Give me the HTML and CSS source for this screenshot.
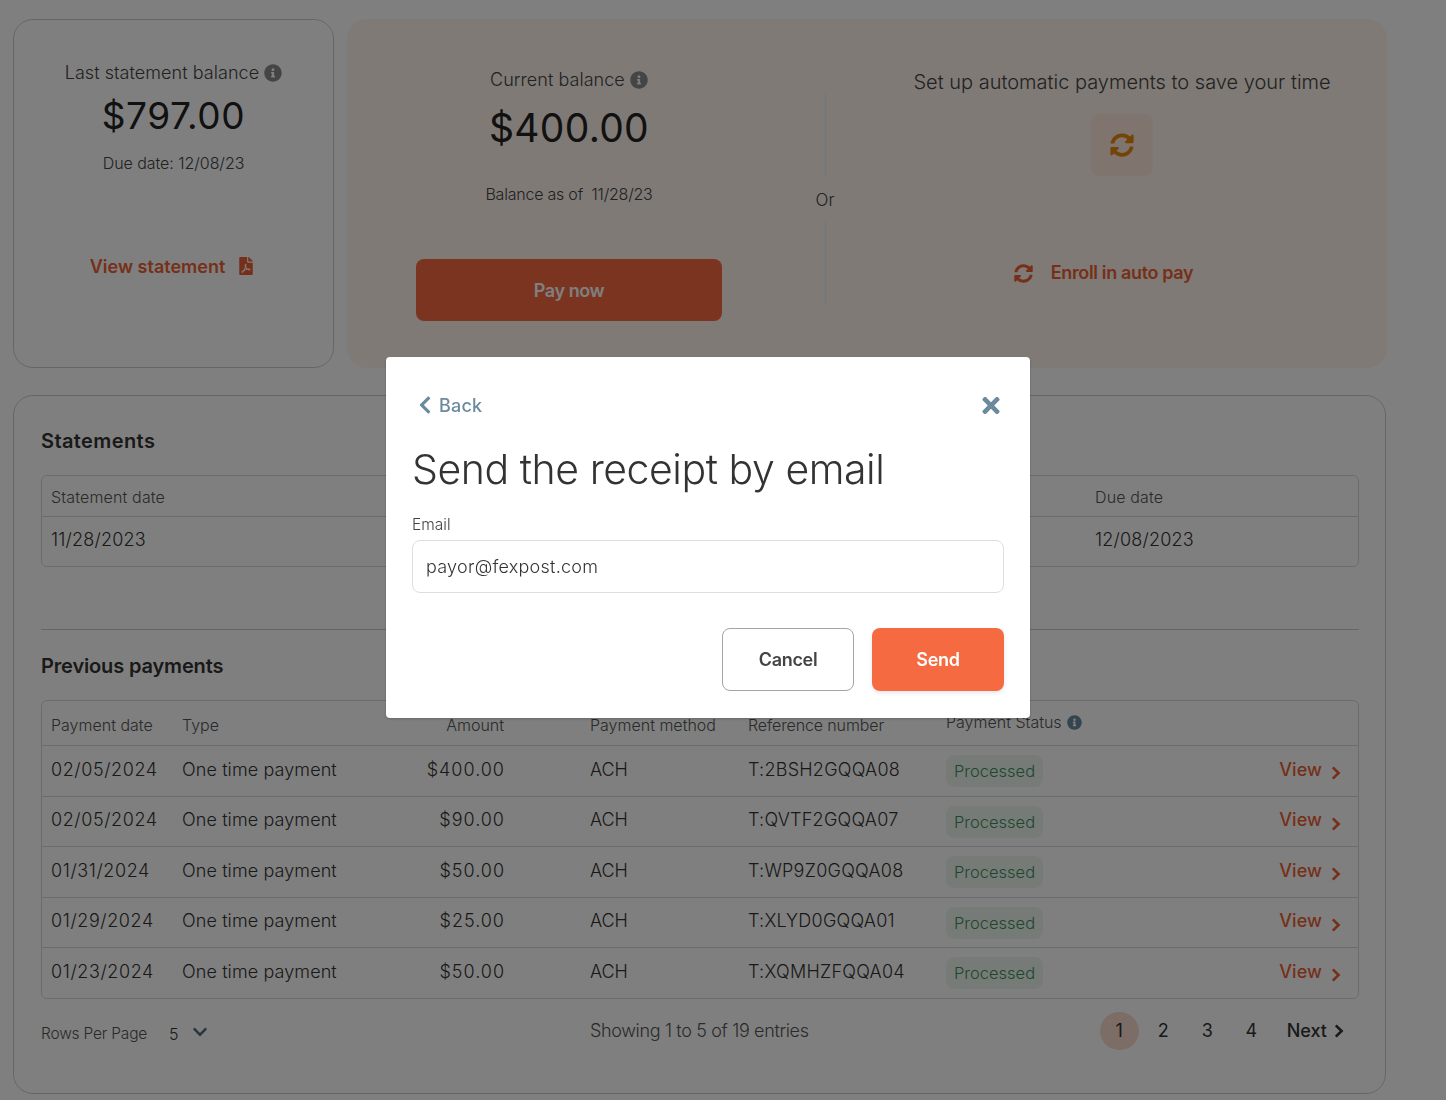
FILE: index.html
```html
<!DOCTYPE html>
<html lang="en">
<head>
<meta charset="utf-8">
<title>Billing</title>
<link rel="stylesheet" href="styles.css">
</head>
<body>
<svg class="defs" aria-hidden="true">
  <symbol id="i-info" viewBox="0 0 512 512"><path d="M256 8C119.043 8 8 119.083 8 256c0 136.997 111.043 248 248 248s248-111.003 248-248C504 119.083 392.957 8 256 8zm0 110c23.196 0 42 18.804 42 42s-18.804 42-42 42-42-18.804-42-42 18.804-42 42-42zm56 254c0 6.627-5.373 12-12 12h-88c-6.627 0-12-5.373-12-12v-24c0-6.627 5.373-12 12-12h12v-64h-12c-6.627 0-12-5.373-12-12v-24c0-6.627 5.373-12 12-12h64c6.627 0 12 5.373 12 12v100h12c6.627 0 12 5.373 12 12v24z"/></symbol>
  <symbol id="i-sync" viewBox="0 0 512 512"><path d="M370.72 133.28C339.458 104.008 298.888 87.962 255.848 88c-77.458.068-144.328 53.178-162.791 126.85-1.344 5.363-6.122 9.15-11.651 9.15H24.103c-7.498 0-13.194-6.807-11.807-14.176C33.933 94.924 134.813 8 256 8c66.448 0 126.791 26.136 171.315 68.685L463.03 40.97C478.149 25.851 504 36.559 504 57.941V192c0 13.255-10.745 24-24 24H345.941c-21.382 0-32.09-25.851-16.971-40.971l41.75-41.749zM32 296h134.059c21.382 0 32.09 25.851 16.971 40.971l-41.75 41.75c31.262 29.273 71.835 45.319 114.876 45.28 77.418-.07 144.315-53.144 162.787-126.849 1.344-5.363 6.122-9.15 11.651-9.15h57.304c7.498 0 13.194 6.807 11.807 14.176C478.067 417.076 377.187 504 256 504c-66.448 0-126.791-26.136-171.315-68.685L48.97 471.03C33.851 486.149 8 475.441 8 454.059V320c0-13.255 10.745-24 24-24z"/></symbol>
  <symbol id="i-right" viewBox="0 0 10 14"><path d="M1.8 1.4 7.6 7 1.8 12.6" fill="none" stroke="currentColor" stroke-width="2.6"/></symbol>
  <symbol id="i-left" viewBox="0 0 320 512"><path d="M34.52 239.03L228.87 44.69c9.37-9.37 24.57-9.37 33.94 0l22.67 22.67c9.36 9.36 9.37 24.52.04 33.9L131.49 256l154.02 154.75c9.34 9.38 9.32 24.54-.04 33.9l-22.67 22.67c-9.37 9.37-24.57 9.37-33.94 0L34.52 272.97c-9.37-9.37-9.37-24.57 0-33.94z"/></symbol>
  <symbol id="i-down" viewBox="0 0 448 512"><path d="M207.029 381.476L12.686 187.132c-9.373-9.373-9.373-24.569 0-33.941l22.667-22.667c9.357-9.357 24.522-9.375 33.901-.04L224 284.505l154.745-154.021c9.379-9.335 24.544-9.317 33.901.04l22.667 22.667c9.373 9.373 9.373 24.569 0 33.941L240.971 381.476c-9.373 9.372-24.569 9.372-33.942 0z"/></symbol>
  <symbol id="i-times" viewBox="0 0 352 512"><path d="M242.72 256l100.07-100.07c12.28-12.28 12.28-32.19 0-44.48l-22.24-22.24c-12.28-12.28-32.19-12.28-44.48 0L176 189.28 75.93 89.21c-12.28-12.28-32.19-12.28-44.48 0L9.21 111.45c-12.28 12.28-12.28 32.19 0 44.48L109.28 256 9.21 356.07c-12.28 12.28-12.28 32.19 0 44.48l22.24 22.24c12.28 12.28 32.2 12.28 44.48 0L176 322.72l100.07 100.07c12.28 12.28 32.2 12.28 44.48 0l22.24-22.24c12.28-12.28 12.28-32.19 0-44.48L242.72 256z"/></symbol>
  <symbol id="i-pdf" viewBox="0 0 384 512"><path d="M181.9 256.1c-5-16-4.9-46.9-2-46.9 8.4 0 7.6 36.9 2 46.9zm-1.7 47.2c-7.7 20.2-17.3 43.3-28.4 62.7 18.3-7 39-17.2 62.9-21.9-12.7-9.6-24.9-23.4-34.5-40.8zM86.1 428.1c0 .8 13.2-5.4 34.9-40.2-6.7 6.3-29.1 24.5-34.9 40.2zM248 160h136v328c0 13.3-10.7 24-24 24H24c-13.3 0-24-10.7-24-24V24C0 10.7 10.7 0 24 0h200v136c0 13.2 10.8 24 24 24zm-8 171.8c-20-12.2-33.3-29-42.7-53.8 4.5-18.5 11.6-46.6 6.2-64.2-4.7-29.4-42.4-26.5-47.8-6.8-5 18.3-.4 44.1 8.1 77-11.6 27.6-28.7 64.6-40.8 85.8-.1 0-.1.1-.2.1-27.1 13.9-73.6 44.5-54.5 68 5.6 6.9 16 10 21.5 10 17.9 0 35.7-18 61.1-61.8 25.8-8.5 54.1-19.1 79-23.2 21.7 11.8 47.1 19.5 64 19.5 29.2 0 31.2-32 19.7-43.4-13.9-13.6-54.3-9.7-73.6-7.2zM377 105L279 7c-4.5-4.5-10.6-7-17-7h-6v128h128v-6.1c0-6.3-2.5-12.4-7-16.9zm-74.1 255.3c4.1-2.7-2.5-11.9-42.8-9 37.1 15.8 42.8 9 42.8 9z"/></symbol>
</svg>

<main class="page">
  <section class="summary">
    <article class="statement-card">
      <p class="label">Last statement balance <svg class="ico info"><use href="#i-info"/></svg></p>
      <p class="amount">$797.00</p>
      <p class="note">Due date: 12/08/23</p>
      <a class="link view-statement">View statement <svg class="ico pdf"><use href="#i-pdf"/></svg></a>
    </article>
    <article class="pay-panel">
      <div class="pay-col">
        <p class="label">Current balance <svg class="ico info"><use href="#i-info"/></svg></p>
        <p class="amount">$400.00</p>
        <p class="note">Balance as of&nbsp; 11/28/23</p>
        <button class="pay-btn">Pay now</button>
      </div>
      <div class="or-col">
        <span class="or-line"></span>
        <span class="or-text">Or</span>
        <span class="or-line"></span>
      </div>
      <div class="auto-col">
        <p class="auto-title">Set up automatic payments to save your time</p>
        <div class="auto-box"><svg class="ico sync-big"><use href="#i-sync"/></svg></div>
        <a class="link enroll"><svg class="ico sync-small"><use href="#i-sync"/></svg>Enroll in auto pay</a>
      </div>
    </article>
  </section>

  <section class="records">
    <h2 class="section-title">Statements</h2>
    <div class="table statements-table">
      <div class="st-row st-head"><span>Statement date</span><span>Due date</span></div>
      <div class="st-row st-body"><span>11/28/2023</span><span>12/08/2023</span></div>
    </div>
    <hr class="rule">
    <h2 class="section-title prev">Previous payments</h2>
    <div class="table">
      <div class="pay-row pay-head">
        <span>Payment date</span><span>Type</span><span class="right">Amount</span><span class="method">Payment method</span><span>Reference number</span>
        <span class="status-head">Payment Status <svg class="ico info slate"><use href="#i-info"/></svg></span><span></span>
      </div>
      <div class="pay-row"><span>02/05/2024</span><span>One time payment</span><span class="right">$400.00</span><span class="method">ACH</span><span>T:2BSH2GQQA08</span><span class="badge">Processed</span><a class="link view">View <svg class="ico chev"><use href="#i-right"/></svg></a></div>
      <div class="pay-row"><span>02/05/2024</span><span>One time payment</span><span class="right">$90.00</span><span class="method">ACH</span><span>T:QVTF2GQQA07</span><span class="badge">Processed</span><a class="link view">View <svg class="ico chev"><use href="#i-right"/></svg></a></div>
      <div class="pay-row"><span>01/31/2024</span><span>One time payment</span><span class="right">$50.00</span><span class="method">ACH</span><span>T:WP9Z0GQQA08</span><span class="badge">Processed</span><a class="link view">View <svg class="ico chev"><use href="#i-right"/></svg></a></div>
      <div class="pay-row"><span>01/29/2024</span><span>One time payment</span><span class="right">$25.00</span><span class="method">ACH</span><span>T:XLYD0GQQA01</span><span class="badge">Processed</span><a class="link view">View <svg class="ico chev"><use href="#i-right"/></svg></a></div>
      <div class="pay-row"><span>01/23/2024</span><span>One time payment</span><span class="right">$50.00</span><span class="method">ACH</span><span>T:XQMHZFQQA04</span><span class="badge">Processed</span><a class="link view">View <svg class="ico chev"><use href="#i-right"/></svg></a></div>
    </div>
    <footer class="pager">
      <div class="rows"><span>Rows Per Page</span><span class="rows-num">5</span><svg class="ico down"><use href="#i-down"/></svg></div>
      <div class="showing">Showing 1 to 5 of 19 entries</div>
      <nav class="pages"><span class="pg current">1</span><span class="pg">2</span><span class="pg">3</span><span class="pg">4</span><span class="next">Next <svg class="ico next-chev"><use href="#i-right"/></svg></span></nav>
    </footer>
  </section>
</main>

<div class="overlay">
  <div class="modal" role="dialog">
    <div class="modal-top">
      <a class="back"><svg class="ico back-chev"><use href="#i-left"/></svg>Back</a>
      <svg class="ico close"><use href="#i-times"/></svg>
    </div>
    <h1 class="modal-title">Send the receipt by email</h1>
    <label class="field-label">Email</label>
    <div class="input">payor@fexpost.com</div>
    <div class="modal-actions">
      <button class="btn cancel">Cancel</button>
      <button class="btn send">Send</button>
    </div>
  </div>
</div>
</body>
</html>
```
FILE: styles.css
```css
* { box-sizing: border-box; }
html, body { margin: 0; height: 100%; overflow: hidden; }
body { font-family: Inter, "Liberation Sans", sans-serif; color: #333; background: #fff; font-weight: 300; }
p, h1, h2 { margin: 0; }
.defs { display: none; }
.ico { fill: currentColor; display: inline-block; }

.page { padding: 19px 0 0 13px; width: 1387px; }
.summary { display: flex; gap: 13px; height: 349px; }
.statement-card { width: 321px; border: 1px solid #c9ced3; border-radius: 20px; padding-top: 41px; display: flex; flex-direction: column; align-items: center; }
.label { font-size: 18px; line-height: 24px; letter-spacing: .05px; color: #444; display: flex; align-items: center; gap: 0; white-space: pre; }
.amount { font-size: 37px; line-height: 44px; font-weight: 400; letter-spacing: .6px; color: #222; }
.statement-card .amount { margin-top: 9px; }
.note { font-size: 16px; line-height: 20px; letter-spacing: -.05px; color: #444; }
.statement-card .note { margin-top: 15px; }
.info { width: 18px; height: 18px; color: #8a8a8a; flex: none; }
.info.slate { width: 15px; height: 15px; color: #6b8a9e; }
.link { color: #ec5f34; font-weight: 600; }
.view-statement { margin-top: 82px; margin-left: -4px; font-size: 18px; line-height: 24px; display: flex; align-items: center; gap: 14px; }
.pdf { width: 14px; height: 18px; margin-top: -3px; }

.pay-panel { width: 1040px; background: #fff4ec; border-radius: 20px; display: flex; padding-left: 69px; }
.pay-col { width: 306px; display: flex; flex-direction: column; align-items: center; padding-top: 49px; }
.pay-col .amount { margin-top: 14px; font-size: 39px; letter-spacing: .3px; }
.pay-col .note { margin-top: 34px; letter-spacing: -.22px; }
.pay-btn { margin-top: 55px; width: 306px; height: 62px; border: 0; border-radius: 8px; background: #f6683f; color: #fff; font: 600 18px Inter, sans-serif; letter-spacing: -.4px; }
.or-col { width: 20px; margin-left: 93px; padding-top: 74px; display: flex; flex-direction: column; align-items: center; }
.or-line { width: 1px; height: 84px; background: #d8f4ff; flex: none; }
.or-text { font-size: 17px; line-height: 24px; margin: 11px 0 9px; color: #444; }
.auto-col { width: 452px; margin-left: 61px; padding-top: 51px; display: flex; flex-direction: column; align-items: center; }
.auto-title { font-size: 20px; line-height: 24px; white-space: nowrap; color: #444; }
.auto-box { margin-top: 20px; width: 62px; height: 62px; border-radius: 8px; background: #ffe8dc; display: flex; align-items: center; justify-content: center; }
.sync-big { width: 24px; height: 24px; color: #e8870c; }
.enroll { margin-top: 85px; font-size: 18px; line-height: 24px; letter-spacing: -.35px; display: flex; align-items: center; margin-left: -37px; }
.sync-small { width: 19px; height: 19px; margin-right: 18px; }

.records { margin-top: 27px; width: 1373px; height: 699px; border: 1px solid #c9ced3; border-radius: 20px; padding: 32px 26px 0 27px; }
.section-title { font-size: 20px; line-height: 26px; font-weight: 600; letter-spacing: .4px; color: #333; }
.table { border: 1px solid #d5d9dc; border-radius: 6px; margin-top: 21px; font-size: 18px; }
.statements-table { margin-top: 21px; height: 92px; }
.st-row { display: grid; grid-template-columns: 1044px 1fr; padding-left: 9px; align-items: center; }
.st-head { height: 41px; padding-top: 2px; font-size: 16px; letter-spacing: .15px; color: #555; border-bottom: 1px solid #d5d9dc; }
.st-body { height: 49px; padding-bottom: 4px; font-size: 18px; letter-spacing: .2px; color: #333; }
.rule { border: 0; border-top: 1px solid #c9ced3; margin: 62px 0 0; }
.section-title.prev { margin-top: 23px; letter-spacing: -.15px; }
.pay-row { display: grid; grid-template-columns: 131px 218px 104px 244px 198px 1fr auto; padding: 0 17px 3px 9px; align-items: center; height: 50.5px; border-bottom: 1px solid #d5d9dc; letter-spacing: .1px; white-space: nowrap; }
.pay-row:last-child { border-bottom: 0; height: 49.5px; }
.pay-row > :first-child { letter-spacing: .6px; }
.pay-row > :nth-child(5) { letter-spacing: .25px; }
.right { text-align: right; letter-spacing: 1px; margin-right: -1px; }
.pay-row.pay-head { height: 45px; padding: 4px 16px 0 9px; font-size: 16px; color: #555; }
.pay-row.pay-head > * { letter-spacing: 0; }
.pay-row.pay-head > :nth-child(5) { letter-spacing: -.12px; }
.pay-row.pay-head .right { margin-right: 0; }
.method { padding-left: 86px; letter-spacing: -.15px; }
.status-head { display: flex; align-items: center; gap: 5px; margin-top: -6px; }
.badge { justify-self: start; height: 32px; line-height: 32px; padding: 0 8px; border-radius: 8px; background: #eef6f1; color: #3a9058; font-size: 16.5px; letter-spacing: 0; margin-top: 4px; }
.view { font-weight: 500; font-size: 18px; letter-spacing: .05px; display: flex; align-items: center; gap: 9px; }
.chev { width: 10px; height: 14px; margin-top: 8px; }

.pager { display: grid; grid-template-columns: 549px 1fr auto; align-items: center; padding: 0 15px 0 0; height: 64px; }
.rows { display: flex; align-items: center; font-size: 15.5px; letter-spacing: -.2px; color: #555; margin-top: 6px; }
.rows-num { margin-left: 22px; color: #333; font-size: 16px; }
.down { width: 16px; height: 16px; margin-left: 14px; margin-top: -3px; color: #4e6c7d; }
.showing { font-size: 18px; letter-spacing: -.35px; color: #555; }
.pages { display: flex; align-items: center; font-size: 18px; font-weight: 400; color: #333; }
.pg { width: 39px; height: 38px; line-height: 38px; text-align: center; margin-right: 5px; border-radius: 50%; }
.pg.current { background: #f8dacd; }
.next { margin-left: 11px; font-weight: 500; display: flex; align-items: center; gap: 7px; }
.next-chev { width: 10px; height: 14px; }

.overlay { position: fixed; inset: 0; background: rgba(0,0,0,.5); }
.modal { position: absolute; left: 386px; top: 357px; width: 644px; height: 361px; background: #fff; border-radius: 4px; padding: 36px 26px 0; box-shadow: 0 1px 3px rgba(0,0,0,.2); }
.modal-top { display: flex; justify-content: space-between; align-items: center; padding: 0 3px 0 6px; height: 24px; }
.back { display: flex; align-items: center; color: #6b8a9e; font-size: 18px; font-weight: 500; letter-spacing: .2px; }
.back-chev { width: 14px; height: 20px; margin-right: 7px; }
.close { width: 20px; height: 25px; color: #6b8a9e; }
.modal-title { margin-top: 25px; font-size: 41px; line-height: 54px; font-weight: 300; letter-spacing: -.45px; color: #333; }
.field-label { display: block; margin-top: 19px; font-size: 15.5px; line-height: 20px; color: #444; }
.input { margin-top: 5px; height: 53px; line-height: 51px; border: 1px solid #dcdfe2; border-radius: 8px; padding-left: 13px; font-size: 18px; letter-spacing: .25px; color: #333; }
.modal-actions { display: flex; justify-content: flex-end; gap: 18px; margin-top: 35px; }
.btn { width: 132px; height: 63px; border-radius: 8px; font: 600 18px Inter, sans-serif; letter-spacing: -.3px; }
.cancel { background: #fff; border: 1px solid #a5a5a5; color: #444; }
.send { background: #f56a40; border: 0; color: #fff; box-shadow: 0 2px 4px rgba(0,0,0,.1); }
```
